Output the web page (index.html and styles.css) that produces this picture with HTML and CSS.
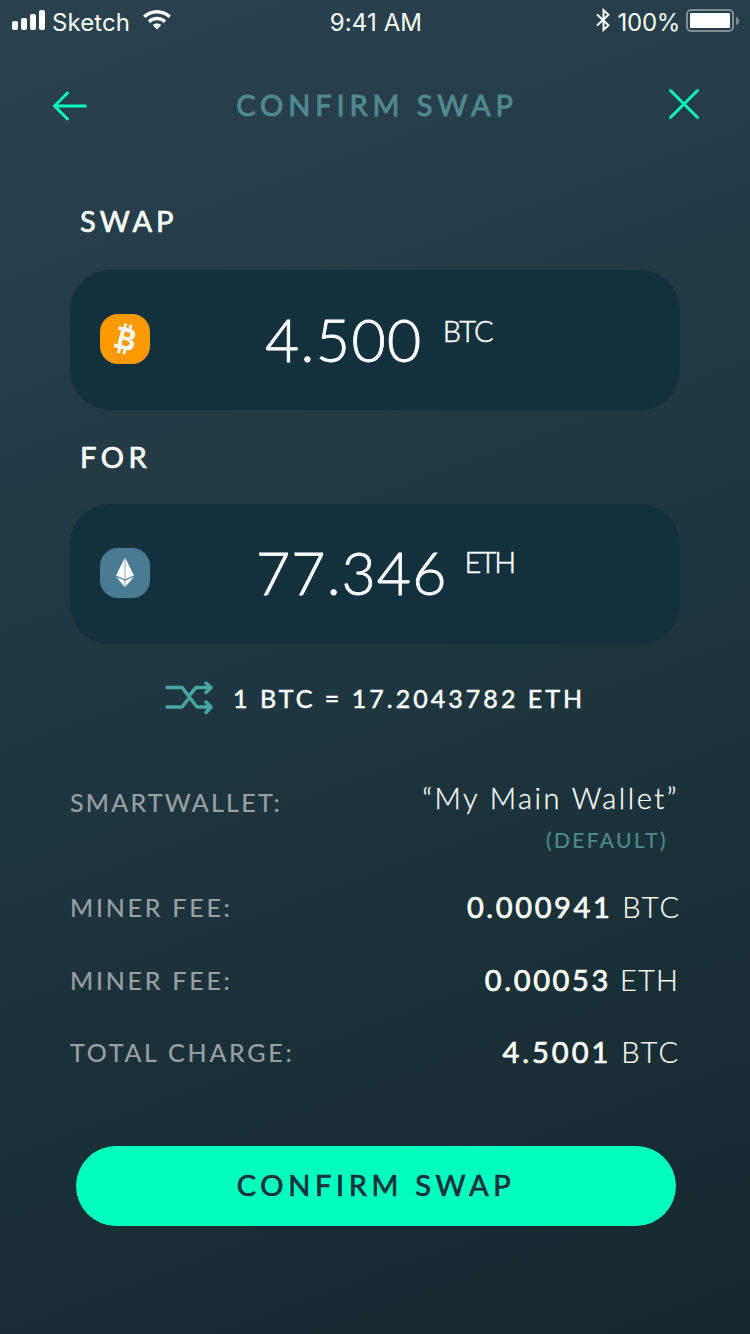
FILE: index.html
```html
<!DOCTYPE html>
<html lang="en">
<head>
  <meta charset="UTF-8" />
  <title>Confirm Swap</title>
  <link rel="stylesheet" href="styles.css">
</head>
<body>
<div class="screen">

  <!-- Status bar -->
  <div class="status">
    <div class="status-left">
      <svg class="signal" width="34" height="20" viewBox="0 0 34 20">
        <rect x="0" y="11" width="6" height="9" rx="2"/>
        <rect x="9" y="8" width="6" height="12" rx="2"/>
        <rect x="18" y="4" width="6" height="16" rx="2"/>
        <rect x="27" y="0" width="6" height="20" rx="2"/>
      </svg>
      <span class="carrier">Sketch</span>
      <svg class="wifi" width="28" height="20" viewBox="0 0 28 20">
        <path d="M14 0C8.600 0 3.700 2.100 0 5.600L2.500 8.100C5.500 5.300 9.500 3.600 14 3.600s8.500 1.700 11.500 4.500L28 5.600C24.300 2.100 19.400 0 14 0z"/>
        <path d="M14 6.800c-3.600 0-6.800 1.400-9.200 3.600l2.500 2.500c1.800-1.600 4.100-2.600 6.700-2.600s4.900 1 6.700 2.600l2.500-2.500C20.800 8.200 17.600 6.800 14 6.800z"/>
        <path d="M14 13.400c-1.700 0-3.200.6-4.400 1.600L14 19.600l4.400-4.600c-1.200-1-2.700-1.600-4.400-1.600z"/>
      </svg>
    </div>
    <span class="clock">9:41 AM</span>
    <div class="status-right">
      <svg class="bluetooth" width="15" height="24" viewBox="0 0 15 24">
        <path d="M1 6.500L12.500 17.300 7.500 22V2l5 4.700L1 17.500"/>
      </svg>
      <span class="percent">100%</span>
      <svg class="battery" width="54" height="23" viewBox="0 0 54 23">
        <rect class="case" x="1" y="1" width="46" height="21" rx="4"/>
        <rect x="4" y="4" width="40" height="15" rx="1"/>
        <path class="tip" d="M50 8c4 1 4 7 0 8z"/>
      </svg>
    </div>
  </div>

  <!-- Title -->
  <div class="header">
    <svg class="back" width="36" height="30" viewBox="0 0 36 30">
      <path d="M15.500 2L2.500 15l13 13M2.500 15h31"/>
    </svg>
    <h1>CONFIRM SWAP</h1>
    <svg class="close" width="32" height="32" viewBox="0 0 32 32">
      <path d="M2.500 2.500l27 27M29.500 2.500l-27 27"/>
    </svg>
  </div>

  <!-- Amounts -->
  <h2 class="label-swap">SWAP</h2>
  <div class="box">
    <div class="coin btc">
      <svg width="26" height="32" viewBox="0 0 26 32">
        <g transform="rotate(14 13 16)">
          <path class="b" fill-rule="evenodd" d="M4 5h11c4.500 0 7 2 7 5.300 0 2.400-1.200 4-3.200 4.700 2.800.6 4.400 2.600 4.400 5.400 0 3.900-2.900 6.100-7.500 6.100H4V23h3V8.500H4zM11 8.700v4.900h3.200c2 0 3-.9 3-2.500s-1-2.400-3-2.400zM11 17.200v5.500h4c2.200 0 3.300-1 3.300-2.800s-1.200-2.700-3.400-2.700z"/>
          <path class="pins" d="M10 .8v5M15.500.8v5M10 26v5M15.500 26v5"/>
        </g>
      </svg>
    </div>
    <div class="amount amount-btc">4.500<sup>BTC</sup></div>
  </div>

  <h2 class="label-for">FOR</h2>
  <div class="box">
    <div class="coin eth">
      <svg width="18" height="30" viewBox="0 0 18 30">
        <path d="M8.700 0v21.300L0 17.500z"/>
        <path d="M9.300 0v21.300L18 17.500z"/>
        <path d="M0 18.700l8.700 3.900V29z"/>
        <path d="M18 18.700l-8.700 3.900V29z"/>
      </svg>
    </div>
    <div class="amount amount-eth">77.346<sup>ETH</sup></div>
  </div>

  <!-- Rate -->
  <div class="rate">
    <svg width="50" height="34" viewBox="0 0 50 34">
      <path d="M3 6.500h15l15 19.500h14M3 26h15l5.500-7M26.500 13L32 6.500h15M42 2l5 4.500-5 5M42 21l5 5-5 5.500"/>
    </svg>
    <span>1 BTC = 17.2043782 ETH</span>
  </div>

  <!-- Details -->
  <div class="row row-wallet">
    <span class="key key-wallet">SMARTWALLET:</span>
    <div class="wallet">
      <span class="wallet-name">“My Main Wallet”</span>
      <span class="wallet-note">(DEFAULT)</span>
    </div>
  </div>
  <div class="row row-fee">
    <span class="key">MINER FEE:</span>
    <span class="value value-fee-btc"><b>0.000941</b> BTC</span>
  </div>
  <div class="row row-fee">
    <span class="key">MINER FEE:</span>
    <span class="value value-fee-eth"><b>0.00053</b> ETH</span>
  </div>
  <div class="row row-total">
    <span class="key key-total">TOTAL CHARGE:</span>
    <span class="value value-total"><b>4.5001</b> BTC</span>
  </div>

  <button class="confirm">CONFIRM SWAP</button>
</div>
</body>
</html>
```
FILE: styles.css
```css
/* ---------- Base ---------- */
*{box-sizing:border-box}
body{
  margin:0;
  font-family:Lato,"Open Sans",sans-serif;
  color:#fff;
}
.screen{
  width:750px;
  height:1334px;
  display:flex;
  flex-direction:column;
  overflow:hidden;
  background:linear-gradient(160deg,#2a424e 0%,#1e363f 50%,#14282d 100%);
}
svg{display:block;flex:none}
h1,h2{margin:0}
span,h1,h2{white-space:nowrap}

/* ---------- Status bar ---------- */
.status{
  height:40px;
  display:grid;
  grid-template-columns:1fr auto 1fr;
  font-family:Inter,sans-serif;
  font-size:24px;
  line-height:30px;
  padding:8px 10px 0 12px;
}
.status svg{fill:#fff}
.status-left,.status-right{display:flex}
.status-right{justify-content:flex-end}
.signal{margin-top:2px}
.carrier{margin-left:6px;letter-spacing:.1px}
.wifi{margin:2px 0 0 13px}
.clock{letter-spacing:.1px}
.status .bluetooth{fill:none;stroke:#fff;stroke-width:2}
.percent{margin-left:7px;letter-spacing:-.3px}
.battery{margin:1px 0 0 6px}
.battery .case{fill:none;stroke:#7f8e94;stroke-width:2}
.battery .tip{fill:#7f8e94}

/* ---------- Header ---------- */
.header{
  height:132px;
  display:flex;
  align-items:center;
  justify-content:space-between;
  padding:0 50px 0 52px;
}
.header svg{fill:none;stroke:#00ffbf;stroke-width:3;stroke-linecap:round;stroke-linejoin:round}
.close{margin-top:-4px}
h1{
  font-size:29px;
  font-weight:400;
  letter-spacing:4.900px;
  color:#4f8a90;
  margin:-3px 2px 0 0;
  -webkit-text-stroke:.9px #4f8a90;
}

/* ---------- Amounts ---------- */
h2{
  font-size:29px;
  line-height:36px;
  font-weight:400;
  padding-left:80px;
  letter-spacing:4px;
  -webkit-text-stroke:.7px #fff;
}
.label-swap{margin:31px 0 31px}
.label-for{margin:29px 0 29px;letter-spacing:4.500px}
.box{
  height:140px;
  margin:0 70px;
  padding-left:30px;
  display:flex;
  align-items:center;
  border-radius:40px;
  background:#12313c;
}
.coin{
  width:50px;
  height:50px;
  margin-bottom:2px;
  border-radius:18px;
  display:flex;
  align-items:center;
  justify-content:center;
}
.btc{background:#ff9900}
.eth{background:#4a7b94}
.coin svg{fill:#fff}
.btc .pins{stroke:#fff;stroke-width:3}
.amount{
  display:flex;
  align-items:flex-start;
  font-size:59px;
  line-height:72px;
  font-weight:300;
  letter-spacing:1.400px;
  -webkit-text-stroke:.8px #fff;
}
.amount sup{font-size:29px;line-height:36px;font-weight:300;-webkit-text-stroke:.5px #fff}
.amount-btc{margin-left:115px}
.amount-eth{margin-left:106px;margin-bottom:2px;letter-spacing:1.100px}
.amount-btc sup{margin:9px 0 0 20px;letter-spacing:-.9px}
.amount-eth sup{margin:7px 0 0 17px;letter-spacing:-1.900px}

/* ---------- Rate ---------- */
.rate{
  height:108px;
  display:flex;
  align-items:center;
  padding-left:164px;
  font-size:25px;
  font-weight:400;
  letter-spacing:3.020px;
  -webkit-text-stroke:.5px #fff;
}
.rate svg{fill:none;stroke:#46a6a2;stroke-width:3.500;stroke-linecap:round;stroke-linejoin:round}
.rate span{margin-left:19px}

/* ---------- Details ---------- */
.row{
  display:flex;
  justify-content:space-between;
  align-items:center;
  padding:0 70px;
}
.row-wallet{height:118px;align-items:flex-start;padding-top:28px}
.row-fee{height:73px}
.row-total{height:71px}
.key{
  font-size:25px;
  color:#9aa0a3;
  letter-spacing:2.750px;
  -webkit-text-stroke:.2px #9aa0a3;
}
.key-wallet{margin-top:7px;letter-spacing:2.250px}
.wallet{display:flex;flex-direction:column;align-items:flex-end}
.wallet-name{
  font-size:29px;
  line-height:36px;
  font-weight:300;
  letter-spacing:2.500px;
  margin-right:1px;
  -webkit-text-stroke:.3px #fff;
}
.wallet-note{
  font-size:21px;
  line-height:28px;
  margin:10px 12px 0 0;
  letter-spacing:2.400px;
  color:#4f8a90;
  -webkit-text-stroke:.2px #4f8a90;
}
.value{font-size:29px;font-weight:300;letter-spacing:2px;-webkit-text-stroke:.2px #fff}
.value b{font-weight:400;letter-spacing:2.600px;-webkit-text-stroke:.7px #fff}
.value-fee-btc{margin-right:-1px}
.value-fee-eth{letter-spacing:1.200px;margin-right:1px}
.value-total b{letter-spacing:3px}

/* ---------- Button ---------- */
.confirm{
  width:600px;
  height:80px;
  margin:59px 0 0 76px;
  border:0;
  border-radius:40px;
  background:#00ffbf;
  color:#12313c;
  font-family:inherit;
  font-size:29px;
  font-weight:400;
  letter-spacing:4.650px;
  padding-bottom:4px;
  -webkit-text-stroke:.7px #12313c;
}
```
